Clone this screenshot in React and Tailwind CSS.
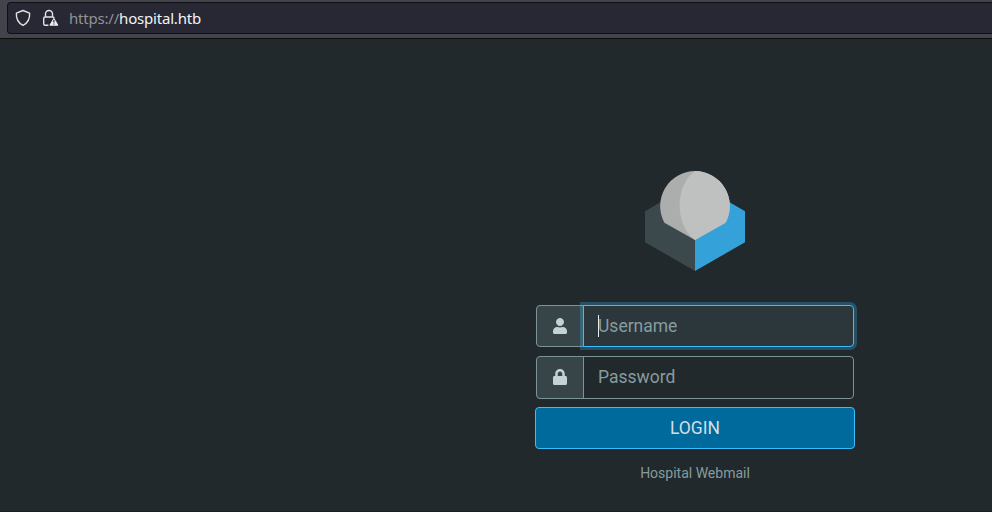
import React from "react";
import { FaUser, FaLock } from "react-icons/fa";

function AddressBar() {
  return (
    <header className="h-[39px] border-b border-[#0c0c0d] bg-[#42434b] pl-[7px] pt-[2px]">
      <div className="flex h-8 items-center rounded-l-[4px] border border-r-0 border-[#0f0f14] bg-[#272833] pl-[6px]">
        <svg className="h-[18px] w-[18px] shrink-0" viewBox="0 0 18 18" fill="none" stroke="#e3e3e6" strokeWidth="1.4" strokeLinejoin="round">
          <path d="M9 1.5 15.6 4.2C16 9.6 13.8 13.8 9 16.4 4.2 13.8 2 9.6 2.4 4.2Z" />
        </svg>
        <svg className="ml-[9px] h-[18px] w-[18px] shrink-0" viewBox="0 0 18 18" fill="none">
          <path d="M4.5 8V5a3.5 3.5 0 0 1 7 0v3M7.4 16.3H4.2a1.5 1.5 0 0 1-1.5-1.5V9.5A1.5 1.5 0 0 1 4.2 8h7.6a1.5 1.5 0 0 1 1.4 1" stroke="#e3e3e6" strokeWidth="1.4" />
          <path d="M12.9 9.4 16.9 16.2H8.9Z" fill="#f0f0f2" stroke="#f0f0f2" strokeWidth="1" strokeLinejoin="round" />
          <path d="M12.9 11v2.6M12.9 14.5v1.1" stroke="#272833" strokeWidth="1.2" />
        </svg>
        <span className="ml-[10px] whitespace-nowrap font-['Noto_Sans',sans-serif] text-[15px] leading-5 tracking-[-0.2px] text-[#929297]">
          https://<span className="text-[#f4f4f7]">hospital.htb</span>
        </span>
      </div>
    </header>
  );
}

function Logo() {
  return (
    <svg className="h-[100px] w-[100px]" viewBox="0 0 100 100">
      <path d="M0 40.2 50 11V100L0 71.3Z" fill="#3b484c" />
      <path d="M100 40.2 50 11V100L100 71.3Z" fill="#35a1d9" />
      <path d="M50 0A35 35 0 0 1 80.6 51.7L50 69 19.4 51.7A35 35 0 0 1 50 0Z" fill="#acaeae" />
      <path d="M50 0A35 35 0 0 1 80.6 51.7L50 69C39.5 61.8 34.6 47.5 34.6 34.6 34.6 20.5 40.5 6.2 50 0Z" fill="#bfc1c1" />
    </svg>
  );
}

function Addon({ children }) {
  return (
    <div className="flex w-12 shrink-0 items-center justify-center rounded-l-[4px] border border-[#7c9497] bg-[#374549] text-[#c5d1d3]">
      {children}
    </div>
  );
}

export default function App() {
  return (
    <div className="flex h-[512px] w-[992px] flex-col overflow-hidden bg-[#21292c] font-[Roboto,sans-serif]">
      <AddressBar />
      <main className="flex flex-1 flex-col items-center border-b border-[#191f24] pl-[398px] pt-[132px]">
        <Logo />
        <form className="mt-[34px] flex w-80 flex-col">
          <div className="mx-px flex h-[42px]">
            <Addon><FaUser size={16} /></Addon>
            <div className="relative -ml-px flex flex-1 items-center rounded-r-[4px] border border-[#37beff] bg-[#2c373c] pl-[14px] text-[17.5px] text-[#869c9e] shadow-[0_0_0_3px_rgba(55,190,255,0.27)]">
              <span className="h-[22px] w-px bg-[#e8eef0]" />
              <span className="-ml-px">Username</span>
            </div>
          </div>
          <div className="mx-px mt-[9px] flex h-[43px]">
            <Addon><FaLock size={16} className="-mt-px" /></Addon>
            <div className="-ml-px flex flex-1 items-center rounded-r-[4px] border border-[#7c9497] pl-[14px] text-[17.5px] text-[#869c9e]">
              Password
            </div>
          </div>
          <button type="button" className="mt-2 h-[42px] rounded-[4px] border border-[#37beff] bg-[#006a9d] text-[17.5px] text-[#d4dfe2]">
            LOGIN
          </button>
        </form>
        <p className="mt-[14px] text-[14px] leading-5 text-[#869c9e]">Hospital Webmail</p>
      </main>
    </div>
  );
}
